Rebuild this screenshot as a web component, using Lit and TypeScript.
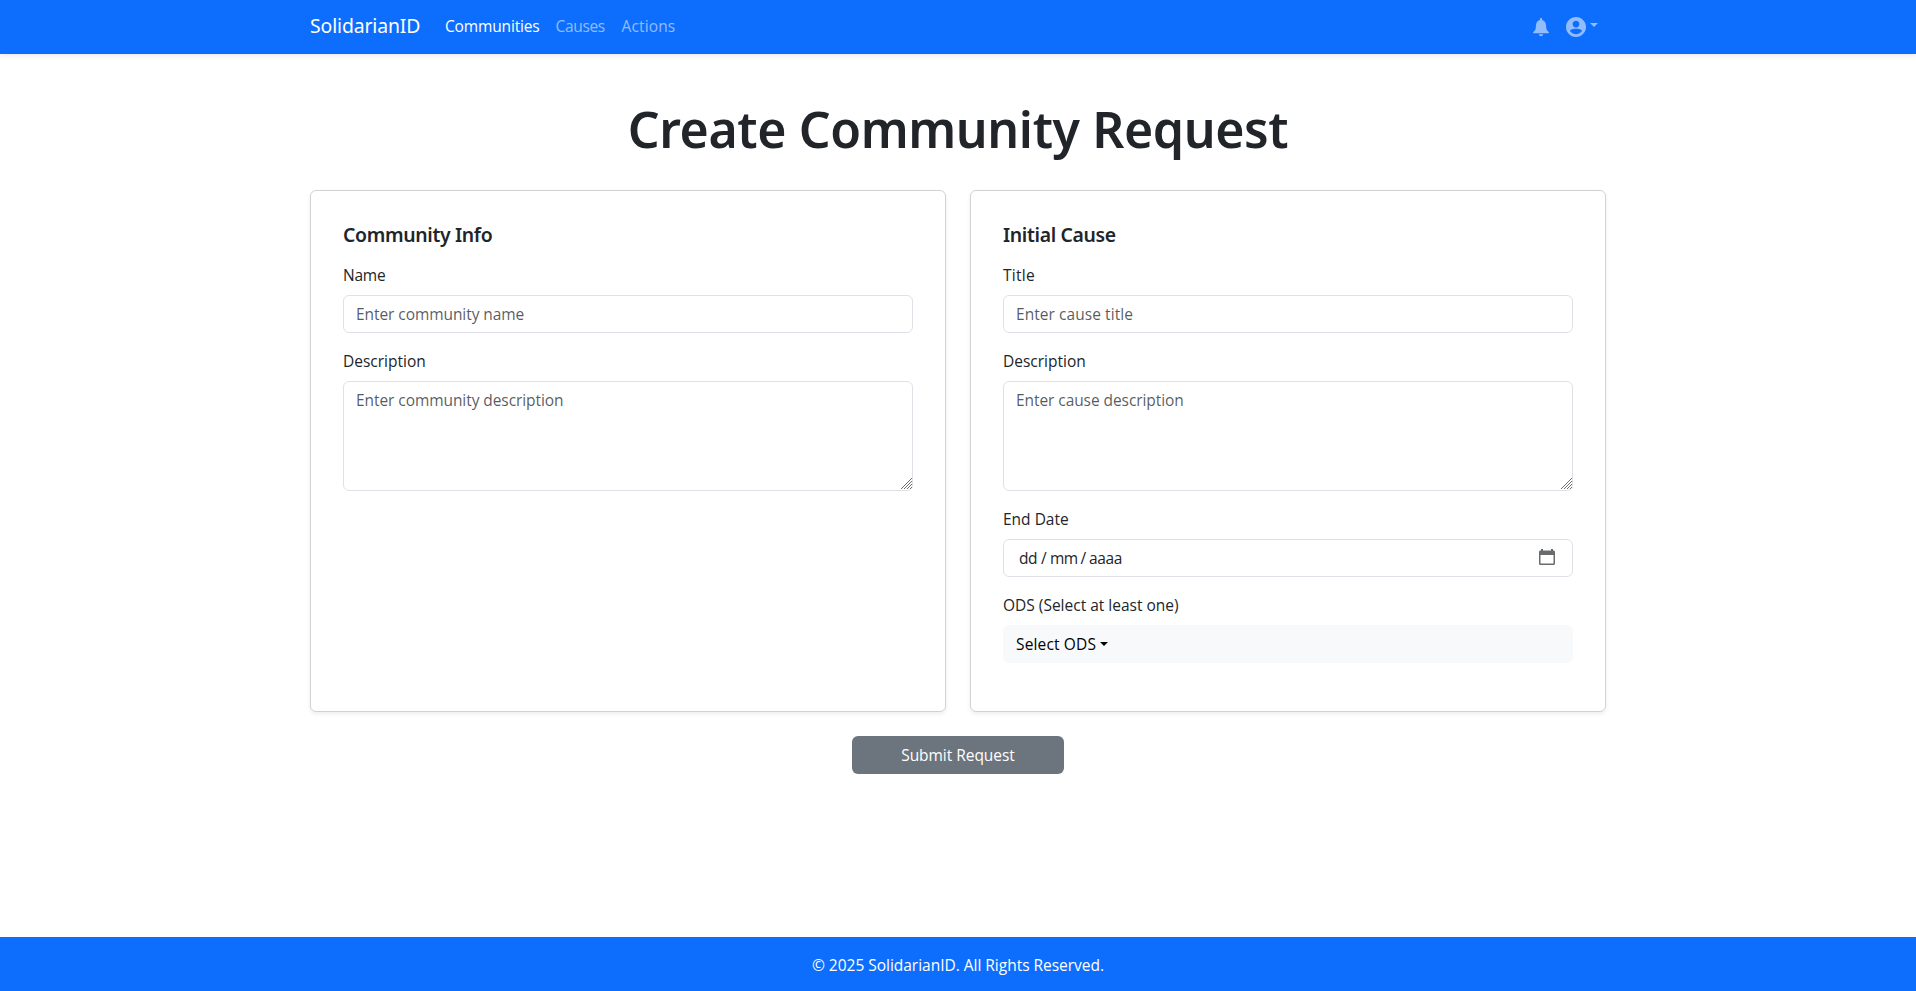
import { LitElement, html, css } from "lit";
import { customElement } from "lit/decorators.js";

@customElement("app-root")
export class AppRoot extends LitElement {
  static styles = css`
    :host {
      display: flex;
      flex-direction: column;
      height: 100vh;
      overflow: hidden;
      background: #fff;
      color: #212529;
      font-family: "Open Sans", "Noto Sans", sans-serif;
      font-size: 15.5px;
      line-height: 24px;
    }
    *, *::before, *::after { box-sizing: border-box; }
    .navbar {
      flex: none;
      height: 54px;
      background: #0d6efd;
      box-shadow: 0 2px 4px rgba(0, 0, 0, 0.075);
    }
    .container {
      width: 1296px;
      margin: 0 auto;
    }
    .bar {
      display: flex;
      align-items: flex-start;
      height: 54px;
    }
    .brand {
      margin-top: 11px;
      width: 135px;
      font-family: "Noto Sans", sans-serif;
      font-size: 19.4px;
      line-height: 30px;
      letter-spacing: -0.121px;
      color: #fff;
      text-decoration: none;
    }
    .links {
      display: flex;
      gap: 16px;
      margin-top: 14px;
      flex: 1;
    }
    .link {
      color: rgba(255, 255, 255, 0.55);
      text-decoration: none;
      white-space: nowrap;
    }
    .link.active { color: #fff; width: 94.5px; letter-spacing: -0.15px; }
    .link.causes { width: 50px; letter-spacing: -0.334px; }
    .link.actions { letter-spacing: 0.134px; }
    .tools {
      display: flex;
      align-items: flex-start;
      margin-top: 17px;
      padding-right: 8px;
      color: rgba(255, 255, 255, 0.55);
    }
    .bell { display: block; width: 16px; height: 19px; margin-top: 1px; }
    .user { display: block; width: 20px; height: 20px; margin-left: 17px; }
    .caret {
      display: inline-block;
      width: 0;
      height: 0;
      border-top: 4px solid;
      border-left: 4px solid transparent;
      border-right: 4px solid transparent;
    }
    .tools .caret { margin: 6px 0 0 4px; }
    main { flex: 1; padding-top: 45px; }
    h1 {
      margin: 0 0 30px;
      text-align: center;
      font-family: "Noto Sans", sans-serif;
      font-weight: 600;
      font-size: 50px;
      line-height: 61px;
      letter-spacing: -0.393px;
    }
    .cards {
      display: grid;
      grid-template-columns: 1fr 1fr;
      gap: 24px;
    }
    .card {
      border: 1px solid rgba(0, 0, 0, 0.175);
      border-radius: 6px;
      padding: 32px 32px 48px;
      box-shadow: 0 2px 4px rgba(0, 0, 0, 0.075);
    }
    h2 {
      margin: 0 0 16px;
      font-family: "Noto Sans", sans-serif;
      font-weight: 600;
      font-size: 19.4px;
      line-height: 24px;
      letter-spacing: -0.34px;
    }
    .field { display: flex; flex-direction: column; gap: 8px; }
    .field + .field { margin-top: 16px; }
    .tight { letter-spacing: -0.25px; }
    .wide { letter-spacing: 0.3px; }
    .control {
      display: block;
      width: 100%;
      height: 38px;
      margin: 0;
      padding: 6px 12px;
      border: 1px solid #dee2e6;
      border-radius: 6px;
      background: #fff;
      color: #212529;
      font: inherit;
      letter-spacing: -0.07px;
      outline: none;
    }
    .control::placeholder { color: rgba(33, 37, 41, 0.75); opacity: 1; }
    .control.loose { letter-spacing: 0.06px; }
    .area { position: relative; }
    textarea.control { height: 110px; resize: none; }
    .grip {
      position: absolute;
      right: 1px;
      bottom: 2px;
      width: 11px;
      height: 11px;
    }
    .date {
      display: flex;
      align-items: flex-start;
      padding-left: 15px;
      letter-spacing: 0;
    }
    .dd { width: 22px; letter-spacing: -0.38px; }
    .slash { width: 9px; }
    .mm { width: 30.5px; letter-spacing: -0.6px; }
    .mm + .slash { width: 8.5px; }
    .aaaa { flex: 1; letter-spacing: -0.4px; }
    .calendar { width: 16px; height: 16px; margin: 3px 5px 0 0; color: #696c6f; }
    .select {
      display: flex;
      align-items: center;
      gap: 4px;
      width: 100%;
      height: 38px;
      padding: 6px 12px 6px 13px;
      border: 0;
      border-radius: 6px;
      background: #f8f9fa;
      color: #000;
      font: inherit;
      letter-spacing: 0.15px;
    }
    .submit {
      display: block;
      width: 212px;
      height: 38px;
      margin: 24px auto 0;
      padding: 0;
      border: 0;
      border-radius: 6px;
      background: #6c757d;
      color: #fff;
      font: inherit;
      letter-spacing: -0.04px;
    }
    footer {
      flex: none;
      height: 54px;
      padding-top: 16px;
      background: #0d6efd;
      color: #fff;
      text-align: center;
      letter-spacing: -0.02px;
    }
  `;

  private area(placeholder: string) {
    return html`
      <div class="area">
        <textarea class="control" placeholder=${placeholder}></textarea>
        <svg class="grip" viewBox="0 0 11 11" fill="none" stroke="#6e6e6e" stroke-width="1">
          <path d="M0 11L11 0M3 11L11 3M6 11L11 6M9 11L11 9" />
        </svg>
      </div>
    `;
  }

  render() {
    return html`
      <nav class="navbar">
        <div class="container bar">
          <a class="brand">SolidarianID</a>
          <div class="links">
            <a class="link active">Communities</a>
            <a class="link causes">Causes</a>
            <a class="link actions">Actions</a>
          </div>
          <div class="tools">
            <svg class="bell" viewBox="0 0 16 19" fill="currentColor">
              <path d="M8 0C7.300 0 6.900 .5 6.900 1.100V1.900C4.500 2.500 3.200 4.500 3 7L2.700 10.200C2.500 12 1.300 13 .3 13.900C-.2 14.400 0 15.300 .8 15.300H15.200C16 15.300 16.200 14.400 15.700 13.900C14.700 13 13.500 12 13.300 10.200L13 7C12.800 4.500 11.500 2.500 9.100 1.900V1.100C9.100 .5 8.700 0 8 0ZM5.700 16.200C6 17.500 6.900 18.200 8 18.200S10 17.500 10.300 16.200Z" />
            </svg>
            <svg class="user" viewBox="2 2 20 20" fill="currentColor">
              <path d="M12 2C6.480 2 2 6.480 2 12s4.480 10 10 10 10-4.480 10-10S17.520 2 12 2zm0 3.700c1.900 0 3.400 1.500 3.400 3.400s-1.500 3.400-3.400 3.400-3.400-1.500-3.400-3.400S10.100 5.700 12 5.700zm0 13.500c-2.500 0-4.710-1.200-6-3.100.03-1.800 4-2.300 6-2.300s5.970.5 6 2.300c-1.290 1.900-3.500 3.100-6 3.100z" />
            </svg>
            <span class="caret"></span>
          </div>
        </div>
      </nav>
      <main>
        <div class="container">
          <h1>Create Community Request</h1>
          <div class="cards">
            <section class="card">
              <h2>Community Info</h2>
              <div class="field">
                <label class="tight">Name</label>
                <input class="control" placeholder="Enter community name" />
              </div>
              <div class="field">
                <label>Description</label>
                ${this.area("Enter community description")}
              </div>
            </section>
            <section class="card">
              <h2>Initial Cause</h2>
              <div class="field">
                <label class="wide">Title</label>
                <input class="control loose" placeholder="Enter cause title" />
              </div>
              <div class="field">
                <label>Description</label>
                ${this.area("Enter cause description")}
              </div>
              <div class="field">
                <label>End Date</label>
                <div class="control date">
                  <span class="dd">dd</span><span class="slash">/</span>
                  <span class="mm">mm</span><span class="slash">/</span>
                  <span class="aaaa">aaaa</span>
                  <svg class="calendar" viewBox="0 0 16 16" fill="currentColor">
                    <path fill-rule="evenodd" d="M2 0H4V1.500H12V0H14V1.500H14.500C15.400 1.500 16 2.200 16 3V14.500C16 15.400 15.400 16 14.500 16H1.500C.6 16 0 15.400 0 14.500V3C0 2.200 .6 1.500 1.500 1.500H2ZM1.500 6V14C1.500 14.400 1.700 14.600 2 14.600H14C14.300 14.600 14.500 14.400 14.500 14V6Z" />
                  </svg>
                </div>
              </div>
              <div class="field">
                <label>ODS (Select at least one)</label>
                <button class="select">Select ODS<span class="caret"></span></button>
              </div>
            </section>
          </div>
          <button class="submit">Submit Request</button>
        </div>
      </main>
      <footer>© 2025 SolidarianID. All Rights Reserved.</footer>
    `;
  }
}
